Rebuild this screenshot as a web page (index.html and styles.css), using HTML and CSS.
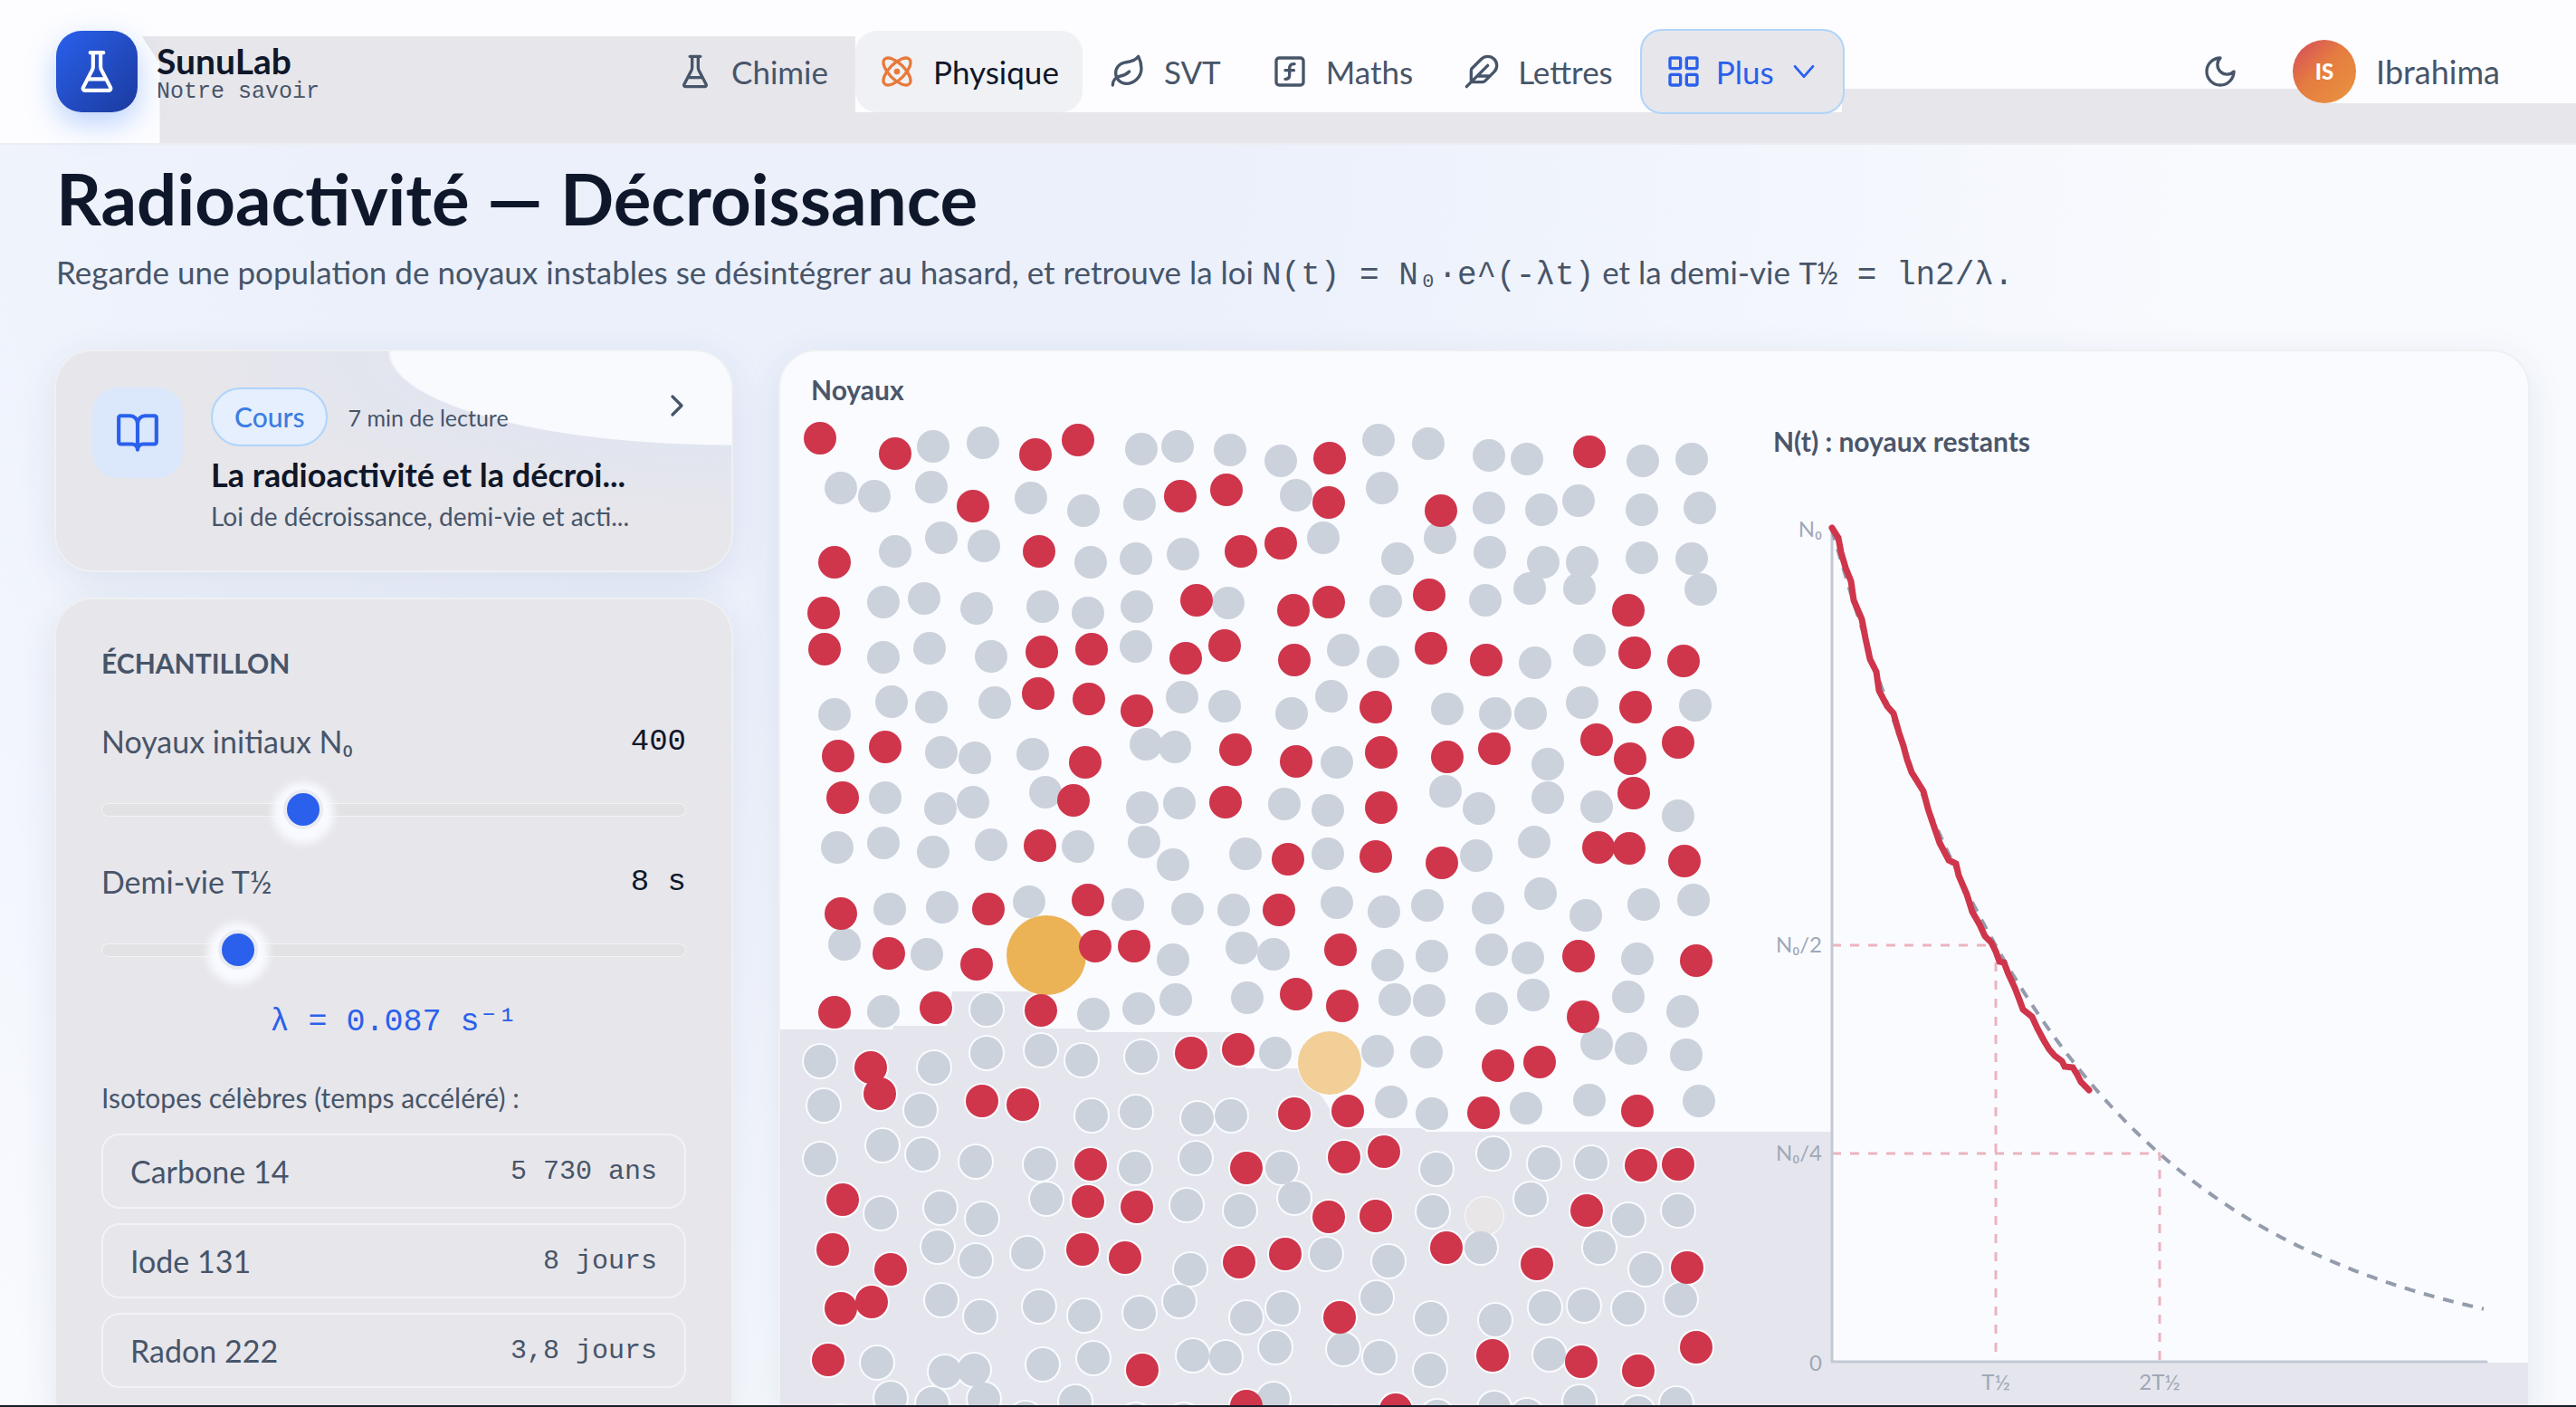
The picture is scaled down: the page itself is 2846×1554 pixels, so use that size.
FILE: index.html
```
<!DOCTYPE html>
<html lang="fr">
<head>
    <meta charset="UTF-8">
    <meta name="viewport" content="width=device-width, initial-scale=1.0">
    <title>SunuLab - Radioactivité</title>
    <link rel="stylesheet" href="styles.css">
</head>
<body>
    <div class="page">
        <header class="header">
            <a href="#" class="brand">
                <span class="logo">
                    <svg viewBox="0 0 24 24"><path d="M10 2v7.3a4 4 0 0 1-.4 1.8L4.7 20.600a1 1 0 0 0 .9 1.400h12.800a1 1 0 0 0 .9-1.400L14.400 11.100a4 4 0 0 1-.4-1.800V2M8.500 2h7M7 16h10"/></svg>
                </span>
                <span class="brand-text">
                    <span class="brand-name">SunuLab</span>
                    <span class="brand-sub">Notre savoir</span>
                </span>
            </a>
            <nav class="nav">
                <a href="#" class="nav-link">
                    <svg viewBox="0 0 24 24"><path d="M10 2v7.300a4 4 0 0 1-.4 1.800L4.700 20.600a1 1 0 0 0 .9 1.400h12.800a1 1 0 0 0 .9-1.400L14.400 11.100a4 4 0 0 1-.4-1.800V2M8.500 2h7M7 16h10"/></svg>
                    Chimie
                </a>
                <a href="#" class="nav-link active">
                    <svg viewBox="0 0 24 24"><circle cx="12" cy="12" r="1"/><path d="M20.200 20.200c2.040-2.030.02-7.360-4.500-11.900-4.540-4.520-9.870-6.540-11.900-4.500-2.040 2.030-.02 7.360 4.500 11.900 4.540 4.520 9.870 6.540 11.900 4.500Z"/><path d="M15.700 15.700c4.520-4.540 6.540-9.870 4.500-11.900-2.030-2.040-7.360-.02-11.900 4.500-4.520 4.540-6.540 9.870-4.500 11.900 2.030 2.040 7.360.02 11.900-4.500Z"/></svg>
                    Physique
                </a>
                <a href="#" class="nav-link">
                    <svg viewBox="0 0 24 24"><path d="M11 20A7 7 0 0 1 9.800 6.100C15.500 5 17 4.480 19 2c1 2 2 4.180 2 8 0 5.500-4.780 10-10 10Z"/><path d="M2 21c0-3 1.850-5.360 5.080-6C9.500 14.520 12 13 13 12"/></svg>
                    SVT
                </a>
                <a href="#" class="nav-link">
                    <svg viewBox="0 0 24 24"><rect x="3" y="3" width="18" height="18" rx="2"/><path d="M9 17c2 0 2.800-1 2.800-2.800V10c0-2 1-3.300 3.200-3M9 11.200h5.700"/></svg>
                    Maths
                </a>
                <a href="#" class="nav-link">
                    <svg viewBox="0 0 24 24"><path d="M12.670 19a2 2 0 0 0 1.416-.588l6.154-6.172a6 6 0 0 0-8.490-8.490L5.586 9.914A2 2 0 0 0 5 11.328V18a1 1 0 0 0 1 1zM16 8 2 22M17.500 15H9"/></svg>
                    Lettres
                </a>
                <button type="button" class="nav-link more">
                    <svg viewBox="0 0 24 24"><rect x="3" y="3" width="7" height="7" rx="1"/><rect x="14" y="3" width="7" height="7" rx="1"/><rect x="14" y="14" width="7" height="7" rx="1"/><rect x="3" y="14" width="7" height="7" rx="1"/></svg>
                    Plus
                    <svg viewBox="0 0 24 24" class="chevron"><path d="m5 8 7 8 7-8"/></svg>
                </button>
            </nav>
            <div class="account">
                <button type="button" class="theme" aria-label="Thème sombre">
                    <svg viewBox="0 0 24 24"><path d="M12 3a6 6 0 0 0 9 9 9 9 0 1 1-9-9Z"/></svg>
                </button>
                <a href="#" class="user"><span class="avatar">IS</span>Ibrahima</a>
            </div>
        </header>

        <main class="main">
            <h1>Radioactivité — Décroissance</h1>
            <p class="intro">Regarde une population de noyaux instables se désintégrer au hasard, et retrouve la loi <code>N(t) = N₀·e^(-λt)</code> et la demi-vie <code>T½ = ln2/λ.</code></p>

            <div class="lab">
                <aside class="side">
                    <a href="#" class="card course">
                        <span class="course-icon">
                            <svg viewBox="0 0 24 24"><path d="M12 7v14M3 18a1 1 0 0 1-1-1V4a1 1 0 0 1 1-1h5a4 4 0 0 1 4 4 4 4 0 0 1 4-4h5a1 1 0 0 1 1 1v13a1 1 0 0 1-1 1h-6a3 3 0 0 0-3 3 3 3 0 0 0-3-3z"/></svg>
                        </span>
                        <span class="course-body">
                            <span class="course-meta"><span class="tag">Cours</span>7 min de lecture</span>
                            <span class="course-title">La radioactivité et la décroi...</span>
                            <span class="course-desc">Loi de décroissance, demi-vie et acti...</span>
                        </span>
                        <svg viewBox="0 0 24 24" class="course-arrow"><path d="m9 18 6-6-6-6"/></svg>
                    </a>

                    <section class="card sample">
                        <h2>Échantillon</h2>
                        <div class="field">
                            <label for="n0">Noyaux initiaux N₀</label>
                            <output for="n0">400</output>
                            <input type="range" id="n0" min="100" max="1000" value="400">
                        </div>
                        <div class="field">
                            <label for="half">Demi-vie T½</label>
                            <output for="half">8 s</output>
                            <input type="range" id="half" min="2" max="30" value="8">
                        </div>
                        <p class="lambda">λ = 0.087 s⁻¹</p>
                        <p class="hint">Isotopes célèbres (temps accéléré) :</p>
                        <div class="isotopes">
                            <button type="button" class="isotope">Carbone 14 <span>5 730 ans</span></button>
                            <button type="button" class="isotope">Iode 131 <span>8 jours</span></button>
                            <button type="button" class="isotope">Radon 222 <span>3,8 jours</span></button>
                        </div>
                    </section>
                </aside>

                <section class="card view">
                    <svg id="scene" viewBox="0 0 1931 1200">
                        <path class="shade" d="M0 749H125V745H184L190 707H292V748H338V752H514V792H571L600 825L620 858H713V862H1162V1117H1931V1200H0Z"/>
                        <g id="nuclei"></g>
                        <text class="title" x="34" y="54">Noyaux</text>

                        <text class="title" x="1097" y="111">N(t) : noyaux restants</text>
                        <path class="guide" d="M1162 656H1343V1116M1162 886H1524V1116"/>
                        <path class="axis" d="M1162 197V1116H1885"/>
                        <path class="theory" id="theory"/>
                        <polyline class="measure" points="1162,195 1169,206 1172,222 1177,239 1183,254 1186,275 1195,296 1199,317 1204,340 1211,354 1214,375 1223,392 1230,400 1236,421 1241,436 1245,451 1250,465 1263,486 1268,505 1273,520 1281,543 1291,562 1299,566 1302,579 1311,600 1317,619 1325,633 1331,646 1338,653 1343,663 1347,674 1352,675 1357,688 1364,703 1369,716 1373,727 1383,735 1389,748 1396,761 1402,771 1408,778 1416,784 1419,790 1428,791 1433,799 1437,807 1446,816"/>
                        <g class="ticks-y">
                            <text x="1151" y="205">N₀</text>
                            <text x="1151" y="664">N₀/2</text>
                            <text x="1151" y="894">N₀/4</text>
                            <text x="1151" y="1126">0</text>
                        </g>
                        <g class="ticks-x">
                            <text x="1343" y="1147">T½</text>
                            <text x="1524" y="1147">2T½</text>
                        </g>
                    </svg>
                </section>
            </div>
        </main>
    </div>
    <script>
        // x,y des noyaux encore instables
        const alive = `44,96 127,113 282,114 329,98 213,171 442,160 493,153 60,233 286,221 509,221 48,289 460,275
            49,329 289,332 344,329 448,339 491,325 285,378 341,384 394,397 64,447 116,437 337,454 503,440 69,493
            324,496 492,498 287,546 607,118 894,111 606,167 730,176 553,212 567,286 606,277 717,269 937,286
            568,341 719,328 780,341 944,333 998,342 658,393 945,393 570,453 664,443 737,448 789,439 902,429
            939,450 992,432 664,504 943,488 561,561 658,558 731,565 904,548 938,549 999,563 67,621 230,616
            340,606 120,665 217,677 348,657 391,657 60,730 172,725 288,728 100,791 454,775 506,771 110,820
            223,828 268,832 343,898 515,902 69,937 340,939 394,945 58,992 122,1014 334,992 381,1001 507,1006
            67,1057 101,1050 53,1114 400,1125 515,1165 67,1182 551,617 619,661 882,668 1012,673 570,710 621,723
            887,735 793,789 839,785 568,842 627,839 777,841 947,839 623,890 667,884 951,899 992,898 606,956
            658,955 891,949 558,997 736,990 836,1008 1002,1012 618,1067 787,1109 885,1116 948,1126 1012,1100
            680,1169 613,1183`;

        // x,y des noyaux désintégrés
        const decayed = `169,105 224,101 399,108 439,105 497,109 67,151 104,160 167,150 277,162 335,176 397,169
            127,221 178,206 225,215 343,233 393,229 445,224 114,277 159,273 217,284 290,282 340,289 394,282
            495,278 114,338 165,328 233,337 393,326 60,401 123,387 167,393 237,388 444,382 491,392 178,443
            215,449 279,445 404,434 436,437 116,493 177,505 213,498 293,487 400,504 441,499 63,548 114,543
            169,553 233,545 329,547 402,542 434,567 514,555 553,121 661,98 716,102 783,115 825,119 953,121
            1007,119 570,159 665,151 783,173 841,175 882,165 952,175 1016,173 600,206 682,229 729,206 784,222
            843,233 886,233 952,228 1007,229 669,276 779,275 828,262 883,262 1017,263 622,330 666,343 834,344
            894,330 565,400 609,381 737,395 790,400 829,400 886,388 1011,391 615,454 848,456 557,500 605,507
            735,486 772,505 848,493 902,503 992,513 605,555 769,557 833,542 121,616 179,614 275,608 384,611
            450,616 501,617 71,655 162,666 434,672 510,659 545,666 114,729 228,727 346,732 396,726 437,716
            516,714 44,784 170,791 228,775 288,772 333,783 399,779 547,775 48,833 155,838 344,844 393,840
            461,847 498,844 44,892 113,877 157,887 216,895 287,898 392,902 459,891 111,952 177,946 223,958
            294,936 449,943 508,949 174,989 216,1004 273,996 453,1014 178,1048 221,1066 286,1055 336,1065
            397,1062 441,1049 515,1067 107,1117 182,1127 214,1125 290,1119 346,1112 456,1109 492,1111 122,1156
            168,1162 225,1157 326,1160 271,1178 393,1180 446,1180 615,609 667,619 715,612 782,615 840,599
            890,623 954,611 1009,606 671,678 720,668 786,661 826,670 947,671 679,716 717,717 786,726 832,711
            937,713 997,729 660,773 714,774 902,765 940,770 1001,777 675,829 720,842 824,836 894,827 1015,828
            554,902 725,903 788,886 844,897 896,896 568,935 721,950 829,936 937,959 992,949 603,997 672,1005
            774,990 905,990 956,1014 555,1057 659,1045 719,1068 790,1070 845,1056 888,1054 937,1057 995,1047
            547,1100 622,1102 662,1111 718,1125 850,1108 545,1157 726,1176 789,1167 825,1175 883,1160
            948,1172 990,1162`;

        // désintégrations en cours : x, y, rayon, opacité
        const flashes = [[294, 667, 44, 0.9], [607, 786, 35, 0.55], [778, 955, 21, 0.08]];

        const nuclei = document.getElementById('nuclei');

        function addCircle(x, y, r, name, opacity = 1) {
            const c = document.createElementNS('http://www.w3.org/2000/svg', 'circle');
            c.setAttribute('cx', x);
            c.setAttribute('cy', y);
            c.setAttribute('r', r);
            c.setAttribute('class', name);
            c.setAttribute('opacity', opacity);
            nuclei.appendChild(c);
        }

        function addAll(list, r, name) {
            list.trim().split(/\s+/).forEach(p => addCircle(...p.split(','), r, name));
        }

        addAll(decayed + ' ' + alive, 20, 'halo');
        flashes.forEach(([x, y, r, o]) => {
            addCircle(x, y, r + 1, 'halo');
            addCircle(x, y, r, r > 30 ? 'flash' : 'flash-end', r > 30 ? o : 1);
        });
        addAll(decayed, 18, 'decayed');
        addAll(alive, 18, 'alive');

        // courbe théorique N0 * 2^(-t/T)
        let d = 'M1162 197';
        for (let x = 1166; x <= 1885; x += 4) {
            d += `L${x} ${(1116 - 919 * Math.pow(2, -(x - 1162) / 181)).toFixed(1)}`;
        }
        document.getElementById('theory').setAttribute('d', d);
    </script>
</body>
</html>
```
FILE: styles.css
```
* {
    box-sizing: border-box;
}
body {
    margin: 0;
    font-family: Lato, "Liberation Sans", sans-serif;
    font-size: 35px;
    color: #475569;
}
a {
    color: inherit;
    text-decoration: none;
}
button {
    font: inherit;
    color: inherit;
    background: none;
    border: none;
    padding: 0;
    cursor: pointer;
}
svg {
    fill: none;
    stroke: currentColor;
    stroke-width: 2;
    stroke-linecap: round;
    stroke-linejoin: round;
}
code,
output,
.brand-sub,
.lambda,
.isotope span {
    font-family: "Liberation Mono", "DejaVu Sans Mono", monospace;
}
code {
    font-size: 36px;
    line-height: 1;
}
.page {
    height: 100vh;
    overflow: hidden;
    border-bottom: 2px solid #1c1c28;
    background: radial-gradient(ellipse 56% 100% at 30% 10%, #ebf0fb 30%, #f8fafe 100%);
}

/* barre du haut */
.header {
    position: relative;
    z-index: 0;
    display: flex;
    align-items: center;
    height: 160px;
    padding: 0 84px 0 62px;
    background: #fdfdff;
    border-bottom: 2px solid #eceef0;
}
.header::before {
    content: "";
    position: absolute;
    inset: 0;
    z-index: -1;
    background: #e7e6eb;
    clip-path: polygon(5.5% 40px, 33.2% 40px, 33.2% 124px, 71.5% 124px, 71.5% 98px, 90% 98px, 90% 114px, 100% 114px, 100% 100%, 6.2% 100%, 6.2% 70px);
}
.brand {
    display: flex;
    align-items: center;
    flex: 0 0 660px;
    gap: 21px;
}
.logo {
    display: flex;
    align-items: center;
    justify-content: center;
    width: 90px;
    height: 90px;
    border-radius: 28px;
    color: #fff;
    background: linear-gradient(135deg, #2a60ec, #1b3a9e);
    box-shadow: 0 12px 32px rgba(59, 130, 246, 0.35);
}
.logo svg {
    width: 50px;
}
.brand-text {
    display: flex;
    flex-direction: column;
    padding-top: 4px;
}
.brand-name {
    font-size: 39px;
    line-height: 42px;
    font-weight: 700;
    color: #0f172a;
}
.brand-sub {
    font-size: 25px;
    line-height: 28px;
}
.nav {
    display: flex;
    align-items: center;
    gap: 4px;
}
.nav-link {
    display: flex;
    align-items: center;
    gap: 20px;
    height: 90px;
    padding: 0 26px;
    border-radius: 24px;
}
.nav-link svg {
    width: 40px;
}
.nav-link.active {
    color: #0f172a;
    background: #f0f1f4;
}
.nav-link.active svg {
    color: #e8793a;
}
.nav-link.more {
    height: 94px;
    gap: 16px;
    color: #2a60ec;
    background: #e7e6eb;
    border: 2px solid #b0d4fb;
}
.nav-link.more .chevron {
    width: 34px;
}
.account {
    display: flex;
    align-items: center;
    gap: 60px;
    margin-left: auto;
}
.theme svg {
    display: block;
    width: 40px;
}
.user {
    display: flex;
    align-items: center;
    gap: 22px;
    font-size: 36px;
}
.avatar {
    width: 70px;
    height: 70px;
    border-radius: 50%;
    font-size: 24px;
    line-height: 70px;
    font-weight: 900;
    text-align: center;
    color: #fff;
    background: linear-gradient(135deg, #d4495e, #e57c40 45%, #e8953f);
}

/* contenu */
.main {
    padding: 17px 53px 0 62px;
}
h1 {
    margin: 0 0 14px;
    font-size: 78px;
    line-height: 84px;
    color: #0f172a;
}
.intro {
    margin: 0 0 63px;
    line-height: 50px;
}
.lab {
    display: grid;
    grid-template-columns: 746px 1fr;
    align-items: start;
    gap: 54px;
}
.side {
    display: flex;
    flex-direction: column;
    gap: 32px;
}
.card {
    border-radius: 40px;
    background: #e7e6eb;
    box-shadow: 0 0 0 2px #eff0f2, 0 10px 44px rgba(30, 60, 110, 0.1);
}
.course {
    display: flex;
    align-items: flex-start;
    height: 242px;
    padding: 40px;
    background:
        radial-gradient(ellipse 380px 104px at 100% 0, #f8fafe 99%, transparent 100%),
        radial-gradient(ellipse 620px 190px at 100% 0, #e1e5f0 50%, #e7e6eb 100%);
}
.course-icon {
    display: flex;
    align-items: center;
    justify-content: center;
    flex: none;
    width: 100px;
    height: 100px;
    margin-right: 31px;
    border-radius: 28px;
    color: #2a60ec;
    background: #dbe7fb;
}
.course-icon svg {
    width: 50px;
}
.course-body {
    flex: 1;
    min-width: 0;
    display: flex;
    flex-direction: column;
    white-space: nowrap;
}
.course-meta {
    display: flex;
    align-items: center;
    gap: 22px;
    margin-bottom: 8px;
    font-size: 25px;
}
.tag {
    padding: 0 24px;
    font-size: 30px;
    line-height: 61px;
    font-weight: 500;
    color: #3b7de0;
    background: #e6effd;
    border: 2px solid #b0d4fb;
    border-radius: 33px;
}
.course-title {
    font-size: 36px;
    line-height: 46px;
    font-weight: 700;
    color: #0f172a;
}
.course-desc {
    font-size: 28px;
    line-height: 46px;
}
.course-arrow {
    flex: none;
    width: 40px;
    margin-left: 36px;
}
.sample {
    padding: 50px;
}
h2 {
    margin: 0 0 42px;
    font-size: 30px;
    line-height: 40px;
    font-weight: 700;
    text-transform: uppercase;
}
.field {
    display: grid;
    grid-template-columns: 1fr auto;
    row-gap: 27px;
    margin-bottom: 31px;
    font-size: 34px;
    line-height: 50px;
}
output {
    font-size: 34px;
    color: #0f172a;
}
input[type="range"] {
    grid-column: 1 / -1;
    appearance: none;
    width: 100%;
    height: 47px;
    margin: 0;
    background: none;
}
input[type="range"]::-webkit-slider-runnable-track {
    height: 15px;
    border-radius: 8px;
    background: #e2e2e5;
    box-shadow: inset 0 0 0 1px #f2f2f5;
}
input[type="range"]::-webkit-slider-thumb {
    appearance: none;
    width: 44px;
    height: 44px;
    margin-top: -15px;
    border-radius: 50%;
    border: 4px solid #e9ebf2;
    background: #2a60ec;
    box-shadow: 0 4px 8px 12px #f8faff;
}
.lambda {
    margin: 0 0 38px;
    line-height: 50px;
    text-align: center;
    color: #2a60ec;
}
.hint {
    margin: 0 0 20px;
    font-size: 30px;
    line-height: 40px;
}
.isotopes {
    display: flex;
    flex-direction: column;
    gap: 16px;
}
.isotope {
    display: flex;
    align-items: center;
    justify-content: space-between;
    height: 83px;
    padding: 0 30px;
    font-size: 34px;
    border: 2px solid #f3f3f6;
    border-radius: 20px;
}
.isotope span {
    font-size: 30px;
}

/* noyaux et courbe */
.view {
    overflow: hidden;
    background: #fafbff;
}
.view svg {
    display: block;
    width: 100%;
    stroke: none;
}
.view text {
    font-size: 24px;
    fill: #a0a8b6;
}
.view .title {
    font-size: 30px;
    font-weight: 700;
    fill: #4b5669;
}
.ticks-y {
    text-anchor: end;
}
.ticks-x {
    text-anchor: middle;
}
.shade {
    fill: #e5e6ed;
}
.halo {
    fill: #fafbff;
}
.decayed {
    fill: #cbd2dc;
}
.alive {
    fill: #cf354b;
}
.flash {
    fill: #e9ab42;
}
.flash-end {
    fill: #e8e6e6;
}
.axis {
    stroke: #c2c9d3;
    stroke-width: 3;
}
.guide {
    stroke: #ecb3bf;
    stroke-width: 3;
    stroke-dasharray: 10 10;
    stroke-linecap: butt;
}
.theory {
    stroke: #949cac;
    stroke-width: 4;
    stroke-dasharray: 12 10;
    stroke-linecap: butt;
}
.measure {
    stroke: #cf354b;
    stroke-width: 7;
    stroke-linejoin: miter;
}
```
